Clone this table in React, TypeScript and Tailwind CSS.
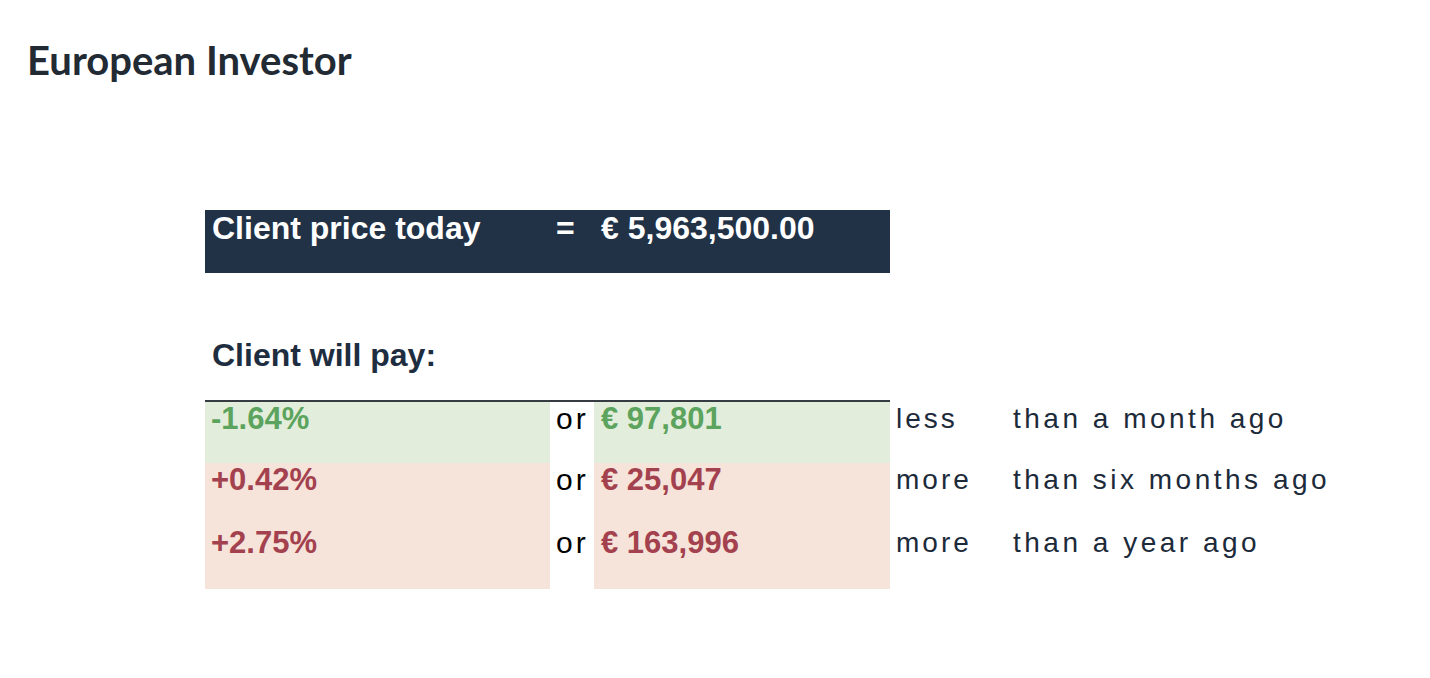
const rows = [
  { pct: "-1.64%", amount: "€ 97,801", dir: "less", when: "than a month ago", up: false },
  { pct: "+0.42%", amount: "€ 25,047", dir: "more", when: "than six months ago", up: true },
  { pct: "+2.75%", amount: "€ 163,996", dir: "more", when: "than a year ago", up: true },
];

export default function App() {
  return (
    <div className="min-h-[678px] w-[1430px] bg-white">
      <h1 className="pl-[27px] pt-[40px] font-['Lato',sans-serif] text-[40px] font-bold leading-[40px] text-[#222a33]">
        European Investor
      </h1>

      <div className="ml-[205px] mt-[130px] font-['Liberation_Sans',Arial,sans-serif]">
        {/* client price */}
        <div className="flex h-[63px] w-[685px] items-start bg-[#213246] pt-[2px] text-[32px] font-bold leading-[32px] text-white">
          <span className="w-[351px] pl-[7px]">Client price today</span>
          <span className="w-[45px]">=</span>
          <span>€ 5,963,500.00</span>
        </div>

        <h2 className="mt-[66px] pl-[7px] text-[32px] font-bold leading-[32px] text-[#1e2d40]">
          Client will pay:
        </h2>

        <div className="mt-[29px] grid w-[1200px] grid-cols-[345px_44px_296px_123px_1fr] border-t-2 border-t-transparent">
          {rows.map((r, i) => {
            const bg = r.up ? "bg-[#f6e4da]" : "bg-[#e2eedb]";
            const fg = r.up ? "text-[#a3414e]" : "text-[#5ca35e]";
            const top = i === 0 ? "border-t-2 border-[#363c42] -mt-[2px]" : "";
            return (
              <div key={i} className="contents">
                <div className={`h-[63px] pl-[6px] pt-[1px] text-[31px] font-bold leading-[31px] ${bg} ${fg} ${top}`}>
                  {r.pct}
                </div>
                <div className={`pl-[6px] pt-[2px] text-[30px] leading-[30px] tracking-[3px] text-black ${top}`}>
                  or
                </div>
                <div className={`h-[63px] pl-[7px] pt-[1px] text-[31px] font-bold leading-[31px] ${bg} ${fg} ${top}`}>
                  {r.amount}
                </div>
                <div className="pl-[6px] pt-[3px] text-[28px] leading-[28px] tracking-[3px] text-[#1c2a3a]">
                  {r.dir}
                </div>
                <div className="pt-[3px] text-[28px] leading-[28px] tracking-[3.5px] text-[#1c2a3a]">
                  {r.when}
                </div>
              </div>
            );
          })}
        </div>
      </div>
    </div>
  );
}
